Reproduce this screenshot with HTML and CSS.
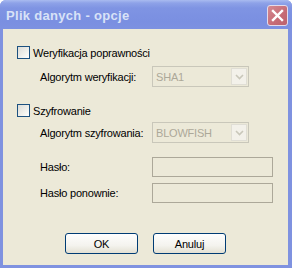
FILE: index.html
```html
<!DOCTYPE html>
<html>
<head>
<meta charset="utf-8">
<link rel="stylesheet" href="styles.css">
</head>
<body>
<div class="window">
  <div class="titlebar">
    <span class="title">Plik danych - opcje</span>
    <span class="close">
      <svg width="13" height="13" viewBox="0 0 13 13"><path d="M2 2 L11 11 M11 2 L2 11" stroke="#fff" stroke-width="2.4" stroke-linecap="square"/></svg>
    </span>
  </div>
  <div class="content">
    <div class="row r1">
      <span class="check"></span><span class="label">Weryfikacja poprawności</span>
    </div>
    <div class="row r2">
      <span class="field-label">Algorytm weryfikacji:</span>
      <span class="select"><span class="sel-text">SHA1</span><span class="arrow"><svg width="9" height="6" viewBox="0 0 9 6"><path d="M1 1 L4.5 4.5 L8 1" fill="none" stroke="#c9c7ba" stroke-width="1.6"/></svg></span></span>
    </div>
    <div class="row r3">
      <span class="check"></span><span class="label">Szyfrowanie</span>
    </div>
    <div class="row r4">
      <span class="field-label">Algorytm szyfrowania:</span>
      <span class="select"><span class="sel-text">BLOWFISH</span><span class="arrow"><svg width="9" height="6" viewBox="0 0 9 6"><path d="M1 1 L4.5 4.5 L8 1" fill="none" stroke="#c9c7ba" stroke-width="1.6"/></svg></span></span>
    </div>
    <div class="row r5">
      <span class="field-label">Hasło:</span>
      <span class="input"></span>
    </div>
    <div class="row r6">
      <span class="field-label">Hasło ponownie:</span>
      <span class="input"></span>
    </div>
    <div class="buttons">
      <span class="btn">OK</span>
      <span class="btn">Anuluj</span>
    </div>
  </div>
</div>
</body>
</html>
```
FILE: styles.css
```css
* { box-sizing: border-box; }
html, body { margin: 0; padding: 0; }
body { width: 292px; height: 268px; overflow: hidden; background: #fff; }
.window {
  width: 292px; height: 268px;
  display: flex; flex-direction: column;
  font-family: "Liberation Sans", Arial, sans-serif;
  font-size: 11px;
  letter-spacing: -0.2px;
  color: #000;
  background: #7f92e0;
  border-radius: 6px 6px 0 0;
  overflow: hidden;
}
.titlebar {
  height: 29px; flex: none;
  display: flex; align-items: center; justify-content: space-between;
  padding: 0 4px 0 6px;
  background: linear-gradient(#a9bbf0 0, #8ea2e8 3px, #7f94e3 8px, #7a8fe1 22px, #7d91e1 29px);
}
.title {
  font-family: "Liberation Sans", Arial, sans-serif;
  font-weight: bold; font-size: 13px;
  color: #d8e2f7;
  letter-spacing: 0.3px;
  margin-top: 1px;
}
.close {
  width: 21px; height: 21px;
  border: 1px solid #e3dbea;
  border-radius: 3px;
  background: linear-gradient(135deg, #d48a92, #c66b75 60%, #bc626c);
  display: flex; align-items: center; justify-content: center;
  margin-top: 1px;
}
.content {
  flex: 1;
  background: #ece9d8;
  margin: 0 4px 3px 3px;
  padding: 17px 0 0 14px;
  display: flex; flex-direction: column;
}
.row { display: flex; align-items: center; }
.r1, .r3 { height: 13px; }
.r2, .r4 { height: 21px; padding-left: 23px; }
.r5, .r6 { height: 20px; padding-left: 23px; }
.r2 { margin-top: 7px; }
.r3 { margin-top: 17px; }
.r4 { margin-top: 5px; }
.r5 { margin-top: 14px; }
.r6 { margin-top: 6px; }
.check {
  width: 13px; height: 13px; flex: none;
  border: 1px solid #1c5180;
  background: linear-gradient(135deg, #dcdcd7, #f4f4f0 70%, #fff);
}
.label { margin-left: 3px; }
.field-label { width: 112px; flex: none; }
.select {
  width: 97px; height: 21px;
  border: 1px solid #c9c7ba;
  display: flex; align-items: center; justify-content: space-between;
  padding: 0 1px 0 3px;
  color: #aca899;
}
.arrow {
  width: 16px; height: 17px;
  border: 1px solid #e0ded5;
  background: #f3f1ea;
  display: flex; align-items: center; justify-content: center;
}
.input {
  width: 121px; height: 20px;
  border: 1px solid #aca899;
}
.buttons {
  display: flex; gap: 15px;
  margin-top: 30px;
  padding-left: 48px;
}
.btn {
  width: 73px; height: 21px;
  border: 1px solid #003c74;
  border-radius: 3px;
  background: linear-gradient(#fefefe, #f4f3ee 60%, #e3e0d3);
  display: flex; align-items: center; justify-content: center;
}
```
